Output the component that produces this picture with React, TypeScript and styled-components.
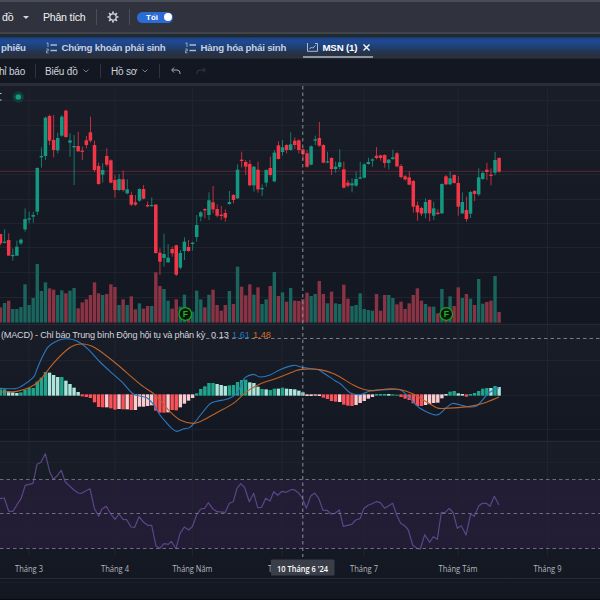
import React from "react";
import styled, { createGlobalStyle } from "styled-components";

const GlobalStyle = createGlobalStyle`
  * { box-sizing: border-box; }
  body { margin: 0; background: #131722; overflow: hidden; }
  svg { flex: none; }
`;

const Page = styled.div`
  width: 600px;
  height: 600px;
  display: flex;
  flex-direction: column;
  overflow: hidden;
  background: #151924;
  color: #d1d4dc;
  font-family: "Liberation Sans", Arial, sans-serif;
  white-space: nowrap;
`;

const Header = styled.header`
  height: 34px;
  flex: none;
  display: flex;
  align-items: center;
  background: #30333d;
  border-top: 2px solid #484c57;
  border-bottom: 2px solid #42434a;
  font-size: 10.6px;
  letter-spacing: -0.25px;
  color: #f1f2f5;
`;

const Label = styled.span<{ $w: number; $ml?: number }>`
  width: ${(p) => p.$w}px;
  margin-left: ${(p) => p.$ml ?? 0}px;
  flex: none;
`;

const Divider = styled.i<{ $ml: number; $mr: number; $h: number; $color?: string }>`
  width: 1px;
  height: ${(p) => p.$h}px;
  margin: 0 ${(p) => p.$mr}px 0 ${(p) => p.$ml}px;
  background: ${(p) => p.$color ?? "#4b4e58"};
`;

const Caret = styled.i`
  margin-left: 9px;
  border: 3px solid transparent;
  border-top-color: #d6d8dd;
  border-bottom: 0;
`;

const ThemeToggle = styled.button`
  width: 36px;
  height: 11px;
  margin: 0;
  padding: 0 1px 0 9px;
  display: flex;
  align-items: center;
  justify-content: space-between;
  border: 0;
  border-radius: 6px;
  background: #2b6bd3;
  color: #fff;
  font: bold 8px "Liberation Sans", Arial, sans-serif;
`;

const Knob = styled.i`
  width: 8px;
  height: 8px;
  border-radius: 50%;
  background: #fff;
`;

const Tabs = styled.nav`
  height: 25px;
  flex: none;
  display: flex;
  align-items: stretch;
  padding-top: 4px;
  background: linear-gradient(#1e2b30 0 3px, #1f438d 4px, #20488f 8px, #1e4279 12px, #243451 18px, #2a303c 22px, #2e3139 24px, #151922 25px);
  font-size: 9.7px;
  font-weight: bold;
  letter-spacing: -0.2px;
  color: #c4d0e6;
`;

const Tab = styled.div<{ $w: number; $ml: number; $active?: boolean }>`
  width: ${(p) => p.$w}px;
  height: 20px;
  margin-left: ${(p) => p.$ml}px;
  padding-left: ${(p) => (p.$active ? 4 : 0)}px;
  padding-top: 1px;
  display: flex;
  align-items: center;
  gap: 4.5px;
  flex: none;
  color: ${(p) => (p.$active ? "#ffffff" : "inherit")};
  border-bottom: 2px solid ${(p) => (p.$active ? "#8e949f" : "transparent")};
`;

const Toolbar = styled.div`
  height: 27px;
  flex: none;
  display: flex;
  align-items: center;
  background: #131721;
  border-bottom: 3px solid #2a2e38;
  font-size: 10px;
  letter-spacing: -0.2px;
  color: #d0d3da;
`;

const Chart = styled.main`
  position: relative;
  height: 514px;
  flex: none;
`;

const MacdLegend = styled.div`
  position: absolute;
  left: 1px;
  top: 242px;
  height: 13px;
  display: flex;
  align-items: center;
  font-size: 9.2px;
  color: #d1d4dc;
`;

const LegendName = styled.span`
  width: 210px;
  letter-spacing: -0.24px;
`;

const LegendValue = styled.span<{ $color: string }>`
  width: 21px;
  color: ${(p) => p.$color};
`;

const Plot = styled.svg`
  display: block;
`;

const UP = "#139881";
const DOWN = "#f23648";

// Each bar: direction, high, body top, body bottom, low, volume top.
// Values are in thirds of a pixel below the origin of the group.
const firstHalf = `
r 402 402 430 435 622|g 388 425 428 430 609|r 400 420 467 467 602|g 445 465 467 482 627|g 422 440 467 467 627|g 415 419 430 435 621
g 325 357 388 395 553|g 335 355 358 370 615|g 335 345 350 368 594|g 202 204 335 345 492|g 142 168 172 203 573|g 50 53 168 180 547
r 44 48 122 135 565|r 45 120 150 172 569|g 98 114 151 160 585|g 45 50 107 110 571|r 29 32 111 113 580|g 100 121 128 170 572
g 105 138 142 255 564|r 95 138 154 155 625|r 140 152 155 180 607|r 108 121 135 145 598|r 50 97 122 127 585|r 122 135 210 215 547
r 188 198 252 254 580|g 190 210 224 248 585|r 145 168 194 200 582|r 178 181 248 250 553|r 225 240 270 293 561|g 222 237 270 273 615
r 212 238 270 275 598|g 238 268 280 283 615|r 275 285 314 318 589|r 285 307 314 318 628|g 265 267 302 305 610|r 255 267 296 298 626
r 305 315 319 322 618|g 292 315 318 320 618|r 312 314 459 461 517|r 445 458 485 525 558|g 401 462 474 500 567|g 432 473 487 488 602
r 440 447 460 470 626|r 434 436 524 528 598|g 450 459 503 508 620|g 412 425 453 480 584|r 420 441 453 455 625|g 425 428 432 452 635
g 345 375 411 425 572|g 333 337 350 364 598|r 325 327 331 355 622|g 277 301 345 360 584|r 258 307 328 340 569|r 313 327 347 352 615
r 318 344 348 360 632|r 328 339 353 365 615|g 273 306 312 314 573|r 282 285 300 310 612|g 193 209 295 297 500|r 155 179 183 202 560
r 180 186 200 225 586|r 180 192 256 258 553|g 198 200 256 275 584|r 185 209 268 278 562|g 253 264 268 288 612|g 208 210 248 260 598
r 170 204 225 230 558|g 150 158 244 247 516|r 124 136 177 178 588|g 120 142 156 167 577|r 133 135 150 160 605|g 97 133 150 152 564
r 112 122 135 147 602|r 118 121 150 160 603|r 145 148 162 180 597|r 150 160 200 203 578|g 136 139 194 196 588|g 107 118 122 135 582
r 66 114 137 140 543`;

const secondHalf = `
r 163 165 218 220 612|g 185 214 217 220 640|r 202 204 237 255 605|g 215 230 237 248 640|g 178 217 231 238 642|r 215 238 293 295 584
r 270 278 287 292 626|g 265 280 286 307 648|g 245 267 287 290 645|g 215 262 266 268 610|g 220 223 263 265 657|g 203 216 222 224 660
g 205 208 212 230 662|r 171 197 204 208 612|r 194 196 204 212 662|r 193 195 219 233 615|g 207 209 219 238 615|g 179 202 207 210 624
r 186 190 229 232 643|r 222 228 261 265 635|r 255 259 268 272 657|r 244 262 284 286 640|r 270 273 350 368 615|r 335 346 367 392 595
r 350 354 371 378 632|g 325 336 370 385 642|r 328 330 370 394 650|g 335 355 377 390 650|r 358 368 372 374 670|g 280 282 370 372 597
r 255 259 283 285 655|g 244 265 283 285 619|r 253 255 279 281 648|r 258 279 350 377 592|g 307 336 370 372 624|r 320 360 387 395 612
g 303 306 371 384 626|r 300 303 312 333 645|g 235 262 313 318 567|g 243 249 267 270 641|r 218 239 246 270 636|r 235 254 258 286 632
g 186 210 248 256 558|r 202 204 245 248 666`;

interface Bar {
  up: boolean;
  y: number[];
}

const parseBars = (source: string, origin: number): Bar[] =>
  source
    .trim()
    .split(/[\n|]/)
    .map((entry) => {
      const [dir, ...values] = entry.split(" ");
      return { up: dir === "g", y: values.map((v) => origin + Number(v) / 3) };
    });

const bars = [...parseBars(firstHalf, 14), ...parseBars(secondHalf, 4)];
const barX = (i: number) => 0.5 + i * 4.087;

// Histogram: colour key and bar end in thirds of a pixel (226 is the zero level).
const histogram =
  "g208 g208 l214 l217 l219 g217 g209 g204 g204 g185 g173 g156 l158 l165 l171 g171 l182 l192 l203 l216 r229 r231 r234 r247 r261 r262 p262 r265 r269 p267 r268 p268 r270 p270 p260 p260 p258 p256 r272 r278 r278 p277 r270 r271 p262 p251 p242 p234 g220 g207 g199 g189 g189 l192 l195 l198 g196 g195 g186 g180 g179 l187 l189 l200 g207 l208 g210 g206 l206 g203 l206 l207 l208 l212 l217 p228 p228 p227 p228 r233 r237 r243 r245 p246 r254 r257 r258 p255 p249 p243 p236 p231 g222 g222 g222 l222 g223 g224 r231 r236 r240 r250 r258 r258 p255 p252 p249 p248 p235 l222 g215 g213 l220 l222 r230 g222 g219 g213 g206 g204 l204 g198 l201".split(" ");

const histColor: Record<string, string> = { g: "#20a58c", l: "#ace5dc", r: "#fb5158", p: "#fccbcf" };

const macdLine =
  "0,205 45,206 62,200 100,172 110,150 125,115 143,82 165,66 190,57 215,58 240,68 265,88 300,126 330,154 365,185 400,222 440,233 462,255 480,285 497,305 512,322 530,334 550,327 570,322 590,300 628,253 650,244 685,236 710,220 725,192 735,173 760,163 780,171 810,165 840,149 880,136 910,143 950,148 965,155 1005,182 1022,192 1050,218 1080,224 1110,213 1160,209 1200,209 1225,230 1260,265 1310,285 1340,262 1360,250 1400,260 1430,258 1460,225 1480,210 1497,203";
const signalLine =
  "0,216 50,214 90,202 120,180 160,130 200,90 225,75 250,72 275,78 300,93 350,132 400,175 430,200 460,220 480,240 510,275 540,300 580,310 610,300 650,278 700,250 740,215 780,192 830,175 880,155 905,148 960,149 1005,163 1060,195 1090,208 1120,212 1160,207 1195,208 1240,222 1270,240 1310,263 1335,265 1410,259 1450,250 1497,231";
const rsiLine =
  "0,176 13,174 26,214 39,214 51,194 63,176 76,136 99,130 111,73 123,67 136,41 149,95 160,118 172,107 184,91 196,126 208,137 222,150 235,159 245,160 258,152 270,146 283,205 296,229 305,208 319,199 333,223 345,238 357,222 369,238 380,239 393,261 404,262 417,230 430,246 443,256 455,256 468,318 480,325 492,311 505,313 514,304 528,326 540,280 553,261 566,270 577,260 590,224 602,207 614,205 625,188 638,206 651,215 676,217 688,190 700,185 711,145 722,131 734,143 748,185 761,160 773,203 785,202 797,175 810,183 821,155 833,166 846,154 858,157 873,149 883,149 895,158 907,174 919,205 932,168 944,159 956,175 969,211 981,211 993,222 1005,220 1018,210 1030,259 1055,253 1067,240 1080,236 1091,206 1104,196 1116,191 1129,185 1141,188 1154,205 1178,190 1190,225 1202,250 1214,257 1225,270 1238,315 1250,325 1261,327 1274,284 1289,307 1300,290 1312,298 1324,218 1336,217 1348,205 1360,219 1372,265 1384,257 1398,285 1412,222 1423,229 1436,198 1447,190 1459,190 1470,199 1483,169 1497,195";

const toPixels = (points: string, origin: number) =>
  points.split(" ").map((p) => {
    const [x, y] = p.split(",").map(Number);
    return [x / 3, origin + y / 3];
  });

const scalePoints = (points: string, origin: number) =>
  toPixels(points, origin)
    .map(([x, y]) => `${x.toFixed(1)},${y.toFixed(1)}`)
    .join(" ");

// Smooth path through the points (Catmull-Rom converted to cubic segments).
const smoothPath = (points: string, origin: number) => {
  const p = toPixels(points, origin);
  let d = `M${p[0][0]} ${p[0][1]}`;
  for (let i = 0; i < p.length - 1; i++) {
    const a = p[Math.max(0, i - 1)];
    const b = p[i];
    const c = p[i + 1];
    const e = p[Math.min(p.length - 1, i + 2)];
    const k = 7;
    d += `C${b[0] + (c[0] - a[0]) / k} ${b[1] + (c[1] - a[1]) / k} ${c[0] - (e[0] - b[0]) / k} ${c[1] - (e[1] - b[1]) / k} ${c[0]} ${c[1]}`;
  }
  return d;
};

const months = [
  { x: 29, text: "Tháng 3", w: 28 },
  { x: 115, text: "Tháng 4", w: 28 },
  { x: 192.5, text: "Tháng Năm", w: 40 },
  { x: 282, text: "Tháng 6", w: 28 },
  { x: 364, text: "Tháng 7", w: 28 },
  { x: 458, text: "Tháng Tám", w: 39 },
  { x: 547.5, text: "Tháng 9", w: 28 },
];

const gridRows = [14, 39, 64, 88, 113, 137, 161, 186, 211, 274, 309, 343, 376, 410, 445];

const ListIcon = () => (
  <svg width="11" height="12" viewBox="0 0 11 12" fill="none" stroke="#a9bad8">
    <path d="M.5 1.5 2 .7V5M.3 7h2v1.8h-1.8v2h2" strokeWidth=".8" />
    <path d="M4.5 3H11M4.5 8.5H11" strokeWidth="1.3" />
  </svg>
);

const ChartIcon = () => (
  <svg width="11" height="9" viewBox="0 0 11 9" fill="none" stroke="#aebbd2">
    <path d="M.5 0v8.3h10V.5H8M2.5 6.2 4.5 4l1.2 1.2L8.3 2.5" />
  </svg>
);

const GearIcon = () => (
  <svg width="12" height="12" viewBox="0 0 12 12" fill="none" stroke="#d5d7dd">
    <circle cx="6" cy="6" r="3.2" strokeWidth="1.3" />
    <path
      d="M6 .5v2M6 9.500v2M.5 6h2M9.500 6h2M2.100 2.100l1.400 1.400M8.500 8.500l1.400 1.400M2.100 9.900l1.400-1.400M8.500 3.500l1.400-1.400"
      strokeWidth="1.700"
    />
  </svg>
);

const Chevron = () => (
  <svg width="6" height="4" viewBox="0 0 6 4" fill="none" stroke="#777b85">
    <path d="m.5.5 2.500 2.500L5.500.5" />
  </svg>
);

const CloseIcon = () => (
  <svg width="7" height="7" viewBox="0 0 7 7" stroke="#fff" strokeWidth="1.300">
    <path d="m.5.5 6 6M6.500.5l-6 6" />
  </svg>
);

const ArrowIcon = ({ redo }: { redo?: boolean }) => (
  <svg width="10" height="8" viewBox="0 0 10 8" fill="none" stroke={redo ? "#363a45" : "#a9acb4"}>
    <path d={redo ? "M7 .5 9.300 3 7 5.500M9 3H4Q.8 3 .8 7" : "M3 .5.700 3 3 5.500M1 3h5q3.200 0 3.200 4"} />
  </svg>
);

const EventBadge = ({ x }: { x: number }) => (
  <g>
    <circle cx={x} cy="228" r="6.300" fill="#0b170f" stroke="#16a51b" strokeWidth="1.300" />
    <text x={x} y="231.200" textAnchor="middle" fontSize="8.500" fontWeight="bold" fill="#20b622">
      F
    </text>
  </g>
);

const ChartPlot = () => (
  <Plot width="600" height="514" viewBox="0 0 600 514">
    <defs>
      <linearGradient id="paneShade" x1="0" y1="0" x2="0" y2="1">
        <stop offset="0" stopColor="#191d28" />
        <stop offset="1" stopColor="#131721" />
      </linearGradient>
    </defs>
    <rect width="600" height="238" fill="url(#paneShade)" />
    <rect y="240" width="600" height="115" fill="url(#paneShade)" />
    <rect y="357" width="600" height="157" fill="url(#paneShade)" />
    <rect y="393.500" width="600" height="69" fill="#221d35" />
    <g stroke="#20242f">
      {months.map((m) => (
        <path key={m.x} d={`M${m.x} 2V470`} />
      ))}
      {gridRows.map((y) => (
        <path key={y} d={`M0 ${y + 0.5}H600`} opacity={y > 300 ? 0.8 : 1} />
      ))}
    </g>
    <path d="M0 238.500H600M0 355.500H600" stroke="#252934" strokeWidth="1.500" />
    <path d="M0 85.300H600" stroke="#642537" strokeWidth=".9" />

    {bars.map(({ up, y: [high, top, bottom, low, volume] }, i) => (
      <g key={i} fill={up ? UP : DOWN}>
        <rect x={barX(i) - 1.700} y={volume} width="3.400" height={236.600 - volume} fill={up ? "#1a655e" : "#8a3344"} />
        <rect x={barX(i) - 0.4} y={high} width=".9" height={low - high} opacity=".85" />
        <rect x={barX(i) - 1.750} y={top} width="3.500" height={Math.max(1.200, bottom - top)} />
      </g>
    ))}
    <EventBadge x={185.300} />
    <EventBadge x={446.300} />

    {histogram.map((bar, i) => {
      const end = Number(bar.slice(1));
      const top = end < 226 ? end : 223;
      const bottom = end < 226 ? 227 : end;
      return (
        <rect
          key={i}
          x={barX(i) - 1.700}
          y={234 + top / 3}
          width="3.400"
          height={(bottom - top) / 3}
          fill={histColor[bar[0]]}
        />
      );
    })}
    <g fill="none" strokeLinejoin="round">
      <path d={smoothPath(macdLine, 234)} stroke="#2b78bd" strokeWidth="1.100" />
      <path d={smoothPath(signalLine, 234)} stroke="#bd6429" strokeWidth="1.100" />
      <polyline points={scalePoints(rsiLine, 354)} stroke="#594787" strokeWidth="1.200" />
      <path d="M0 393.500H600M0 427.500H600M0 462.500H600" stroke="#77758a" strokeWidth=".9" strokeDasharray="3.500 3" />
      <path d="M206 252.500H600" stroke="#848790" strokeWidth=".9" strokeDasharray="3.500 3" />
      <path d="M302.800 0V471" stroke="#8d9099" strokeDasharray="3.500 3" />
    </g>

    <path d="M0 492.500H600" stroke="#262a35" />
    <path d="M0 496.500H600" stroke="#1a1e29" />
    <path d="M0 513.500H600" stroke="#080b12" />
    <g fill="#b4b7bf" fontFamily="Open Sans, sans-serif" fontSize="9" textAnchor="middle">
      {months.map((m) => (
        <text key={m.x} x={m.x} y="485.500" textLength={m.w} lengthAdjust="spacingAndGlyphs">
          {m.text}
        </text>
      ))}
      <rect x="271" y="473.500" width="63.500" height="16" rx="1" fill="#3a3e49" />
      <text x="302.500" y="486" fill="#fff" fontWeight="600" textLength="51" lengthAdjust="spacingAndGlyphs">
        10 Tháng 6 '24
      </text>
    </g>
    <circle cx="18.300" cy="11" r="5.700" fill="#133a3b" />
    <circle cx="18.300" cy="11" r="2.800" fill="#139c82" />
    <path d="M0 7.500h1.500M0 14h1.500" stroke="#c5c8cf" />
  </Plot>
);

export default function App() {
  return (
    <Page>
      <GlobalStyle />
      <Header>
        <Label $w={12} $ml={2}>đồ</Label>
        <Caret />
        <Label $w={39} $ml={14}>Phân tích</Label>
        <Divider $ml={14} $mr={10} $h={16} />
        <GearIcon />
        <Divider $ml={10} $mr={7} $h={16} />
        <ThemeToggle>
          Tối
          <Knob />
        </ThemeToggle>
      </Header>
      <Tabs>
        <Tab $w={25} $ml={1}>phiếu</Tab>
        <Tab $w={120} $ml={20}>
          <ListIcon />
          Chứng khoán phái sinh
        </Tab>
        <Tab $w={103} $ml={19}>
          <ListIcon />
          Hàng hóa phái sinh
        </Tab>
        <Tab $w={70} $ml={15} $active>
          <ChartIcon />
          <Label $w={36}>MSN (1)</Label>
          <CloseIcon />
        </Tab>
      </Tabs>
      <Toolbar>
        <Label $w={27} $ml={-1}>hỉ báo</Label>
        <Divider $ml={9} $mr={9} $h={14} $color="#2f333d" />
        <Label $w={38}>Biểu đồ</Label>
        <Chevron />
        <Divider $ml={11} $mr={10} $h={14} $color="#2f333d" />
        <Label $w={31}>Hồ sơ</Label>
        <Chevron />
        <Divider $ml={11} $mr={11} $h={14} $color="#2f333d" />
        <ArrowIcon />
        <Label $w={15} />
        <ArrowIcon redo />
      </Toolbar>
      <Chart>
        <ChartPlot />
        <MacdLegend>
          <LegendName>(MACD) - Chỉ báo Trung bình Động hội tụ và phân kỳ</LegendName>
          <LegendValue $color="#d1d4dc">0.13</LegendValue>
          <LegendValue $color="#2677bd">1.61</LegendValue>
          <LegendValue $color="#d36e29">1.48</LegendValue>
        </MacdLegend>
      </Chart>
    </Page>
  );
}
